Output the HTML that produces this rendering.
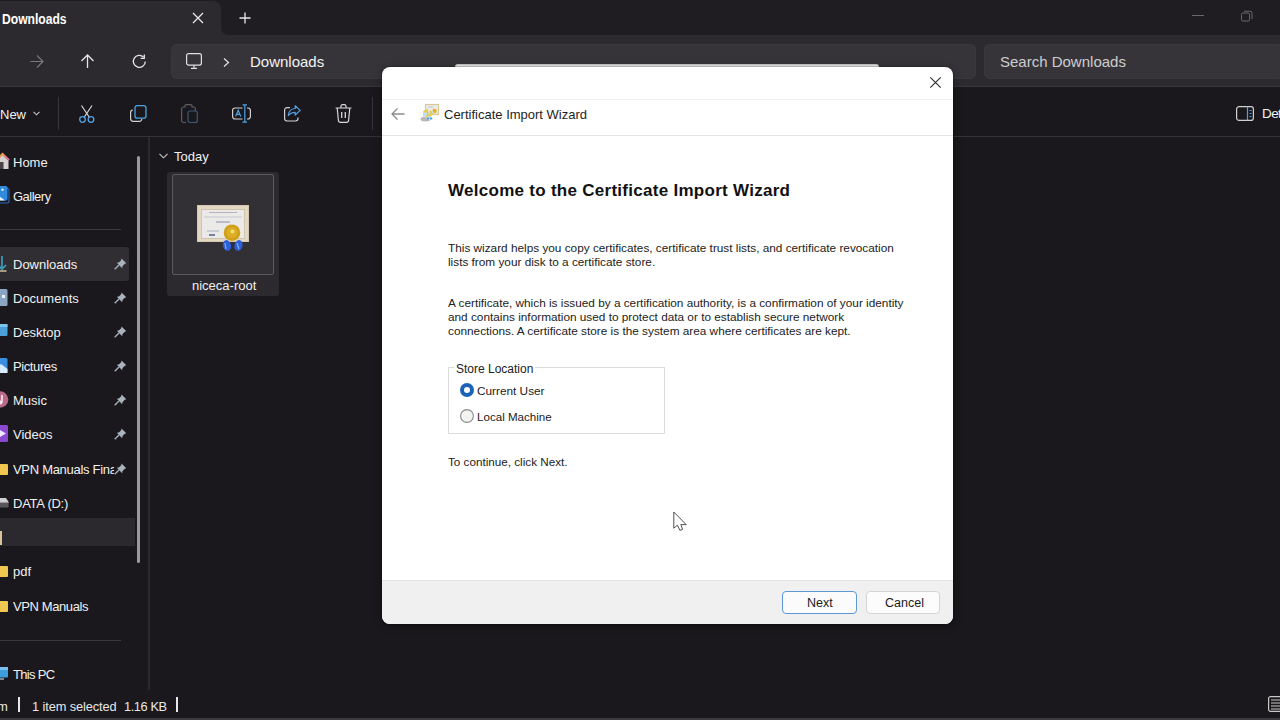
<!DOCTYPE html>
<html><head><meta charset="utf-8">
<style>
*{margin:0;padding:0;box-sizing:border-box}
html,body{width:1280px;height:720px;overflow:hidden;background:#1a181c;font-family:"Liberation Sans",sans-serif}
.a{position:absolute}
.t{position:absolute;white-space:nowrap;color:#fff}
svg{position:absolute;overflow:visible}
#titlebar{left:0;top:0;width:1280px;height:36px;background:#1f1d21}
#tbfill{left:210px;top:20px;width:30px;height:16px;background:#2c2a2e}
#tbdark{left:221px;top:0;width:1059px;height:35px;background:#1f1d21;border-radius:0 0 0 7px}
#tab{left:0;top:1px;width:221px;height:40px;background:#2c2a2e;border-radius:0 8px 0 0}
#nav{left:0;top:35px;width:1280px;height:52px;background:#2c2a2e}
#navline{left:0;top:86px;width:1280px;height:1px;background:#38363a}
#addr{left:171px;top:43.5px;width:805px;height:35px;background:#363438;border-radius:6px;box-shadow:inset 0 0 0 1px #3a383c}
#search{left:984px;top:43.5px;width:300px;height:35px;background:#363438;border-radius:6px;box-shadow:inset 0 0 0 1px #3a383c}
#cmd{left:0;top:87px;width:1280px;height:50px;background:#1a181c}
#cmdline{left:0;top:136px;width:1280px;height:1px;background:#353337}
#side{left:0;top:137px;width:150px;height:553px;background:#1a181c}
#sideline{left:148px;top:137px;width:2px;height:553px;background:#2b292d}
#status{left:0;top:690px;width:1280px;height:30px;background:#1a181c}
#botline{left:0;top:718px;width:1280px;height:2px;background:#3c3b40}
.sitem{position:absolute;left:13px;font-size:13px;color:#f0f0f0;white-space:nowrap}
.sep{position:absolute;height:1px;background:#3b393d}
.vsep{position:absolute;width:1px;background:#37353a}
</style></head><body>
<div class="a" id="titlebar"></div>
<div class="a" id="tbfill"></div>
<div class="a" id="tab"></div>
<div class="a" id="tbdark"></div>
<div class="a" id="nav"></div>
<div class="a" id="navline"></div>
<div class="a" id="addr"></div>
<div class="a" id="search"></div>
<div class="a" id="cmd"></div>
<div class="a" id="cmdline"></div>
<div class="a" id="side"></div>
<div class="a" id="sideline"></div>
<div class="a" id="status"></div>
<div class="a" id="botline"></div>

<!-- tab title -->
<div class="t" style="left:2px;top:11px;font-size:14px;font-weight:bold;transform:scaleX(0.865);transform-origin:0 0">Downloads</div>
<svg style="left:192px;top:12px" width="12" height="12" viewBox="0 0 12 12"><path d="M1 1L11 11M11 1L1 11" stroke="#e8e8e8" stroke-width="1.3" fill="none"/></svg>
<svg style="left:239px;top:12px" width="12" height="12" viewBox="0 0 12 12"><path d="M6 0.5V11.5M0.5 6H11.5" stroke="#e8e8e8" stroke-width="1.3" fill="none"/></svg>
<!-- window controls -->
<div class="a" style="left:1192px;top:15px;width:12px;height:1px;background:#6a686c"></div>
<svg style="left:1241px;top:10px" width="12" height="12" viewBox="0 0 12 12"><rect x="0.5" y="3" width="8" height="8" rx="1.5" stroke="#6a686c" stroke-width="1" fill="none"/><path d="M3 1.2H9a2 2 0 0 1 2 2V9" stroke="#6a686c" stroke-width="1" fill="none"/></svg>

<!-- nav icons -->
<svg style="left:30px;top:55px" width="14" height="13" viewBox="0 0 14 13"><path d="M0.5 6.5H13M7 0.5L13 6.5L7 12.5" stroke="#7a787c" stroke-width="1.2" fill="none"/></svg>
<svg style="left:81px;top:54px" width="13" height="14" viewBox="0 0 13 14"><path d="M6.5 14V1M0.5 7L6.5 1L12.5 7" stroke="#e6e6e6" stroke-width="1.3" fill="none"/></svg>
<svg style="left:132px;top:54px" width="15" height="15" viewBox="0 0 15 15"><path d="M13.3 7.5A6 6 0 1 1 11.6 3.2" stroke="#e6e6e6" stroke-width="1.3" fill="none"/><path d="M12.3 0.6V4.3H8.6" stroke="#e6e6e6" stroke-width="1.3" fill="none"/></svg>
<svg style="left:186px;top:53px" width="16" height="16" viewBox="0 0 16 16"><rect x="0.6" y="0.6" width="14.8" height="11.5" rx="2" stroke="#e0e0e0" stroke-width="1.2" fill="none"/><path d="M5 15.4H11M8 12.2V15.4" stroke="#e0e0e0" stroke-width="1.2" fill="none"/></svg>
<svg style="left:223px;top:58px" width="7" height="9" viewBox="0 0 7 9"><path d="M1 0.5L5.5 4.5L1 8.5" stroke="#e6e6e6" stroke-width="1.2" fill="none"/></svg>
<div class="t" style="left:250px;top:53px;font-size:15px;color:#f2f2f2">Downloads</div>
<div class="t" style="left:1000px;top:53px;font-size:15px;color:#cfcdd0">Search Downloads</div>

<!-- command bar -->
<div class="t" style="left:0px;top:107px;font-size:13px;color:#f2f2f2">New</div>
<svg style="left:33px;top:111px" width="7" height="5" viewBox="0 0 7 5"><path d="M0.5 0.8L3.5 3.8L6.5 0.8" stroke="#c8c8c8" stroke-width="1.1" fill="none"/></svg>
<div class="vsep" style="left:58px;top:97px;height:33px"></div>
<!-- scissors -->
<svg style="left:79px;top:105px" width="16" height="18" viewBox="0 0 16 18"><path d="M2.5 0.5L10.5 12.5M13 0.5L5 12.5" stroke="#d8d8d8" stroke-width="1.2" fill="none"/><circle cx="3.5" cy="14.5" r="2.8" stroke="#4fa3e3" stroke-width="1.3" fill="none"/><circle cx="12" cy="14.5" r="2.8" stroke="#4fa3e3" stroke-width="1.3" fill="none"/></svg>
<!-- copy -->
<svg style="left:130px;top:105px" width="17" height="17" viewBox="0 0 17 17"><path d="M2.8 5.2A2.3 2.3 0 0 0 0.6 7.5V13.5A2.8 2.8 0 0 0 3.4 16.3H9.5A2.3 2.3 0 0 0 11.8 14" stroke="#d0d0d0" stroke-width="1.2" fill="none"/><rect x="5" y="0.6" width="11" height="12.6" rx="2.3" stroke="#4fa3e3" stroke-width="1.3" fill="none"/></svg>
<!-- paste disabled -->
<svg style="left:181px;top:104px" width="17" height="19" viewBox="0 0 17 19"><path d="M4 3H2.6A2 2 0 0 0 0.6 5V16.5A2 2 0 0 0 2.6 18.5H5" stroke="#5e5c60" stroke-width="1.2" fill="none"/><path d="M4 3.5V1.8A1.2 1.2 0 0 1 5.2 0.6H9.8A1.2 1.2 0 0 1 11 1.8V3.5" stroke="#5e5c60" stroke-width="1.2" fill="none"/><path d="M11 3H12.4A2 2 0 0 1 14.4 5V7" stroke="#5e5c60" stroke-width="1.2" fill="none"/><rect x="7" y="7" width="9.3" height="11.5" rx="2" stroke="#3e5a70" stroke-width="1.2" fill="none"/></svg>
<!-- rename -->
<svg style="left:232px;top:104px" width="19" height="19" viewBox="0 0 19 19"><path d="M10.5 4H3A2.4 2.4 0 0 0 0.6 6.4V12.6A2.4 2.4 0 0 0 3 15H10.5" stroke="#d0d0d0" stroke-width="1.2" fill="none"/><path d="M15 4H16A2.4 2.4 0 0 1 18.4 6.4V12.6A2.4 2.4 0 0 1 16 15H15" stroke="#d0d0d0" stroke-width="1.2" fill="none"/><path d="M12.8 0.6V18.4M10.5 0.8H15M10.5 18.2H15" stroke="#4fa3e3" stroke-width="1.2" fill="none"/><path d="M3.6 12.5L6.2 6.2L8.8 12.5M4.6 10.3H7.8" stroke="#4fa3e3" stroke-width="1.2" fill="none"/></svg>
<!-- share -->
<svg style="left:284px;top:105px" width="17" height="17" viewBox="0 0 17 17"><path d="M6 2.6H3A2.4 2.4 0 0 0 0.6 5V13.6A2.4 2.4 0 0 0 3 16H11.6A2.4 2.4 0 0 0 14 13.6V12.5" stroke="#d0d0d0" stroke-width="1.2" fill="none"/><path d="M11.2 0.8L16.2 5.4L11.2 10V7.3C8 7.3 6 8.2 4.2 10.6C4.6 6.5 7 3.8 11.2 3.5Z" stroke="#4fa3e3" stroke-width="1.2" fill="none" stroke-linejoin="round"/></svg>
<!-- delete -->
<svg style="left:335px;top:104px" width="17" height="19" viewBox="0 0 17 19"><path d="M0.6 4H16.4M6 4V2.2A1.6 1.6 0 0 1 7.6 0.6H9.4A1.6 1.6 0 0 1 11 2.2V4" stroke="#d8d8d8" stroke-width="1.2" fill="none"/><path d="M2.2 4L3.4 16.2A2.3 2.3 0 0 0 5.7 18.4H11.3A2.3 2.3 0 0 0 13.6 16.2L14.8 4" stroke="#d8d8d8" stroke-width="1.2" fill="none"/><path d="M6.7 8V14M10.3 8V14" stroke="#d8d8d8" stroke-width="1.3" fill="none"/></svg>
<div class="vsep" style="left:372px;top:97px;height:33px"></div>
<!-- details -->
<svg style="left:1236px;top:106px" width="18" height="15" viewBox="0 0 18 15"><rect x="0.6" y="0.6" width="16.8" height="13.8" rx="2.5" stroke="#d0d0d0" stroke-width="1.2" fill="none"/><path d="M11.5 0.8V14.2" stroke="#4fa3e3" stroke-width="1.2"/><path d="M13.5 4.5H15.5M13.5 7.5H15.5M13.5 10.5H15.5" stroke="#4fa3e3" stroke-width="1"/></svg>
<div class="t" style="left:1262px;top:106px;font-size:13.5px;color:#f2f2f2;letter-spacing:-0.6px">Details</div>

<!-- sidebar -->
<div class="a" style="left:0;top:247px;width:129px;height:34px;background:#302e32;border-radius:0 3px 3px 0"></div>
<div class="a" style="left:0;top:518px;width:135px;height:28px;background:#2b292d;border-radius:0"></div>
<div class="sep" style="left:0;top:229px;width:121px"></div>
<div class="sep" style="left:0;top:640px;width:121px"></div>
<div class="a" style="left:137px;top:156px;width:3px;height:407px;background:#9b999d;border-radius:2px"></div>

<div id="sidebar-items">
<div class="sitem" style="top:155px">Home</div>
<div class="sitem" style="top:189px;letter-spacing:-0.5px">Gallery</div>
<div class="sitem" style="top:257px">Downloads</div>
<div class="sitem" style="top:291px">Documents</div>
<div class="sitem" style="top:325px">Desktop</div>
<div class="sitem" style="top:359px;letter-spacing:-0.4px">Pictures</div>
<div class="sitem" style="top:393px">Music</div>
<div class="sitem" style="top:427px">Videos</div>
<div class="sitem" style="top:462px;letter-spacing:-0.3px;width:101px;overflow:hidden">VPN Manuals Final</div>
<div class="sitem" style="top:496px;letter-spacing:-0.25px">DATA (D:)</div>
<div class="sitem" style="top:564px">pdf</div>
<div class="sitem" style="top:599px;letter-spacing:-0.4px">VPN Manuals</div>
<div class="sitem" style="top:667px;letter-spacing:-0.7px">This PC</div>
</div>
<svg style="left:114px;top:258px" width="13" height="12" viewBox="0 0 13 12"><path d="M7.5 0.5L12.3 5.3L10.8 5.8L8.4 8.2L8.2 10.2L2.8 4.8L4.8 4.6L7.2 2.2Z" fill="#a9b3bd"/><path d="M5 7L0.7 11.3" stroke="#a9b3bd" stroke-width="1.3"/></svg>
<svg style="left:114px;top:292px" width="13" height="12" viewBox="0 0 13 12"><path d="M7.5 0.5L12.3 5.3L10.8 5.8L8.4 8.2L8.2 10.2L2.8 4.8L4.8 4.6L7.2 2.2Z" fill="#a9b3bd"/><path d="M5 7L0.7 11.3" stroke="#a9b3bd" stroke-width="1.3"/></svg>
<svg style="left:114px;top:326px" width="13" height="12" viewBox="0 0 13 12"><path d="M7.5 0.5L12.3 5.3L10.8 5.8L8.4 8.2L8.2 10.2L2.8 4.8L4.8 4.6L7.2 2.2Z" fill="#a9b3bd"/><path d="M5 7L0.7 11.3" stroke="#a9b3bd" stroke-width="1.3"/></svg>
<svg style="left:114px;top:360px" width="13" height="12" viewBox="0 0 13 12"><path d="M7.5 0.5L12.3 5.3L10.8 5.8L8.4 8.2L8.2 10.2L2.8 4.8L4.8 4.6L7.2 2.2Z" fill="#a9b3bd"/><path d="M5 7L0.7 11.3" stroke="#a9b3bd" stroke-width="1.3"/></svg>
<svg style="left:114px;top:394px" width="13" height="12" viewBox="0 0 13 12"><path d="M7.5 0.5L12.3 5.3L10.8 5.8L8.4 8.2L8.2 10.2L2.8 4.8L4.8 4.6L7.2 2.2Z" fill="#a9b3bd"/><path d="M5 7L0.7 11.3" stroke="#a9b3bd" stroke-width="1.3"/></svg>
<svg style="left:114px;top:428px" width="13" height="12" viewBox="0 0 13 12"><path d="M7.5 0.5L12.3 5.3L10.8 5.8L8.4 8.2L8.2 10.2L2.8 4.8L4.8 4.6L7.2 2.2Z" fill="#a9b3bd"/><path d="M5 7L0.7 11.3" stroke="#a9b3bd" stroke-width="1.3"/></svg>
<svg style="left:114px;top:463px" width="13" height="12" viewBox="0 0 13 12"><path d="M7.5 0.5L12.3 5.3L10.8 5.8L8.4 8.2L8.2 10.2L2.8 4.8L4.8 4.6L7.2 2.2Z" fill="#a9b3bd"/><path d="M5 7L0.7 11.3" stroke="#a9b3bd" stroke-width="1.3"/></svg>


<svg style="left:0;top:152px" width="10" height="18" viewBox="0 0 10 18"><defs><linearGradient id="rg" x1="0" y1="0" x2="1" y2="1"><stop offset="0" stop-color="#f0b030"/><stop offset="1" stop-color="#d060b0"/></linearGradient></defs><path d="M-4 9L2.5 2.5L8.5 8.5V17H-4Z" fill="#d6d2d0"/><rect x="-4" y="10" width="7.5" height="7" fill="#4a4248"/><path d="M-4 8.5L2.5 2L9.2 8.2" stroke="url(#rg)" stroke-width="2.2" fill="none"/></svg>
<svg style="left:0;top:186px" width="10" height="18" viewBox="0 0 10 18"><rect x="-4" y="2.5" width="13" height="14.5" rx="1.5" fill="none" stroke="#2a64b8" stroke-width="1.2"/><rect x="-6" y="0" width="13.5" height="14.5" rx="1.5" fill="#2f8ae0"/><path d="M-6 6L5 14.5H-6Z" fill="#eaf4fc"/><circle cx="2.5" cy="3.8" r="1.2" fill="#dff0fc"/></svg>
<svg style="left:0;top:256px" width="7" height="16" viewBox="0 0 7 16"><path d="M2 0V12" stroke="#3fa3c0" stroke-width="1.6"/><path d="M-3 8L2 13L6 9" stroke="#3fa3c0" stroke-width="1.6" fill="none"/><path d="M-3 15H6.5" stroke="#c8b898" stroke-width="1.6"/></svg>
<svg style="left:0;top:289px" width="8" height="17" viewBox="0 0 8 17"><rect x="-6" y="0" width="13.5" height="17" rx="1.5" fill="#8aa6c4"/><rect x="2" y="6" width="3" height="3" fill="#e8f0f8"/></svg>
<svg style="left:0;top:324px" width="8" height="14" viewBox="0 0 8 14"><rect x="-6" y="0" width="13.5" height="12" rx="1.5" fill="#4aa0d8"/><rect x="-6" y="0" width="13.5" height="3" fill="#7cc4ee"/></svg>
<svg style="left:0;top:358px" width="8" height="15" viewBox="0 0 8 15"><rect x="-6" y="0" width="13.5" height="15" rx="1.5" fill="#3a8ee0"/><path d="M-6 12L1 6L7.5 11V15H-6Z" fill="#d6ebfb"/></svg>
<svg style="left:0;top:391px" width="9" height="17" viewBox="0 0 9 17"><circle cx="0" cy="8.5" r="8.3" fill="#b86a8a"/><path d="M2 4V11" stroke="#f4e8ee" stroke-width="1.6"/><circle cx="0.5" cy="11.5" r="2" fill="#f4e8ee"/></svg>
<svg style="left:0;top:425px" width="9" height="17" viewBox="0 0 9 17"><rect x="-6" y="0" width="14" height="17" rx="1.5" fill="#8a4ad0"/><path d="M0 5L6 8.5L0 12Z" fill="#f0e8ff"/></svg>
<div class="a" style="left:0;top:464px;width:8px;height:11px;background:#f0c850;border-radius:0 1px 1px 0"></div>
<svg style="left:0;top:498px" width="9" height="10" viewBox="0 0 9 10"><path d="M-3 0H6L8.6 4H-3Z" fill="#d0d0d4"/><rect x="-3" y="4" width="11.6" height="5.5" rx="0.8" fill="#58565a"/><rect x="-3" y="4" width="11.6" height="1" fill="#9a989c"/></svg>
<div class="a" style="left:0;top:531px;width:2px;height:14px;background:#d8c49a"></div>
<div class="a" style="left:0;top:566px;width:8px;height:11px;background:#f0c850;border-radius:0 1px 1px 0"></div>
<div class="a" style="left:0;top:601px;width:8px;height:11px;background:#f0c850;border-radius:0 1px 1px 0"></div>
<svg style="left:0;top:667px" width="9" height="14" viewBox="0 0 9 14"><rect x="-6" y="0" width="14" height="10.5" rx="1" fill="#3d9ee0"/><rect x="-6" y="0" width="14" height="3" fill="#7ac0ee"/><rect x="-2" y="11" width="6" height="2" fill="#7a8a9a"/></svg>


<!-- content -->
<svg style="left:159px;top:153px" width="9" height="6" viewBox="0 0 9 6"><path d="M0.5 0.8L4.5 4.8L8.5 0.8" stroke="#c8c8c8" stroke-width="1.1" fill="none"/></svg>
<div class="t" style="left:174px;top:149px;font-size:13px;color:#f0f0f0">Today</div>
<div class="a" style="left:167px;top:172px;width:112px;height:124px;background:#2c2a2e;border-radius:3px"></div>
<div class="a" style="left:172px;top:174px;width:102px;height:101px;border:1px solid #5a585c;border-radius:2px;background:#323034"></div>

<div class="a" style="left:197px;top:205px;width:52px;height:37px;background:#e2d8c4;border:1px solid #d4c8b0"></div>
<div class="a" style="left:201px;top:209px;width:44px;height:30px;border:1px solid #cfc4ae;background:#eceae8"></div>
<div class="a" style="left:209px;top:212px;width:28px;height:1px;background:#b4b4c0"></div>
<div class="a" style="left:204px;top:216px;width:38px;height:2px;background:#d8d8de"></div>
<div class="a" style="left:216px;top:221px;width:14px;height:2px;background:#b8bccc"></div>
<div class="a" style="left:207px;top:230px;width:12px;height:2px;background:#c8ccd4"></div>
<div class="a" style="left:209px;top:234px;width:6px;height:2px;background:#7880a0"></div>
<svg style="left:222px;top:223px" width="22" height="29" viewBox="0 0 22 29"><ellipse cx="5" cy="22.5" rx="4" ry="5.5" transform="rotate(-15 5 22.5)" fill="#2f5fd8"/><ellipse cx="16.5" cy="22.5" rx="4" ry="5.5" transform="rotate(15 16.5 22.5)" fill="#2f5fd8"/><path d="M3 20L4 26M15 20L17 26" stroke="#7ab0f0" stroke-width="1.2"/><circle cx="10" cy="9.7" r="8.3" fill="#cfa018"/><circle cx="10" cy="9.7" r="5.5" fill="#dcae24"/><circle cx="10.5" cy="8.5" r="2" fill="#f4dc70"/></svg>

<div class="t" style="left:192px;top:278px;font-size:13px;color:#f0f0f0">niceca-root</div>

<!-- status bar -->
<div class="t" style="left:-3px;top:699px;font-size:13px;color:#e8e8e8">m</div>
<div class="a" style="left:18px;top:697px;width:2px;height:15px;background:#e8e8e8"></div>
<div class="t" style="left:32px;top:699px;font-size:12.8px;color:#e8e8e8;letter-spacing:-0.1px">1 item selected</div>
<div class="t" style="left:124px;top:699px;font-size:12.8px;color:#e8e8e8;letter-spacing:-0.4px">1.16 KB</div>
<div class="a" style="left:176px;top:697px;width:2px;height:15px;background:#e8e8e8"></div>
<svg style="left:1268px;top:696px" width="14" height="16" viewBox="0 0 14 16"><rect x="0.6" y="0.6" width="14" height="14.8" rx="2" stroke="#c8c8c8" stroke-width="1.2" fill="none"/><path d="M3 4H14M3 7H14M3 10H14M3 13H14" stroke="#c8c8c8" stroke-width="1.2"/></svg>

<!-- ghost behind dialog -->
<div class="a" style="left:455px;top:64px;width:424px;height:4px;background:#e6e6e6;border-radius:3px 3px 0 0;border-top:1px solid #c8c8c8"></div>
<div class="a" id="dlg" style="left:382px;top:67px;width:571px;height:557px;background:#fff;border-radius:8px;overflow:hidden;box-shadow:0 0 0 1px rgba(0,0,0,0.12),0 2px 8px rgba(0,0,0,0.4)">
 <div class="a" style="left:0;top:32px;width:571px;height:1px;background:#f0f0f0"></div>
 <svg style="left:548px;top:10px" width="11" height="11" viewBox="0 0 11 11"><path d="M0.3 0.3L10.7 10.7M10.7 0.3L0.3 10.7" stroke="#2a2a2a" stroke-width="1.1" fill="none"/></svg>
 <svg style="left:9px;top:41px" width="14" height="12" viewBox="0 0 14 12"><path d="M13.5 6H1M6.5 0.5L1 6L6.5 11.5" stroke="#8c8c8c" stroke-width="1.3" fill="none"/></svg>
 <svg style="left:38px;top:37px" width="20" height="20" viewBox="0 0 20 20"><rect x="5.5" y="0.5" width="13" height="10" fill="#ecebe8" stroke="#d8c898" stroke-width="1.2"/><path d="M8 3H13" stroke="#c0c0c0" stroke-width="1"/><circle cx="14.5" cy="7" r="2.2" fill="#e8b020"/><ellipse cx="5.5" cy="15" rx="5" ry="2.5" fill="#b8b8bc"/><path d="M3 7L6 5L9 8L12 6L14 9L11 12L13 15L9 16L6 14L3 12Z" fill="#bfe0f6"/><path d="M4 8L7 6L8 11L6 13M10 7L12 10L9 12" stroke="#f0c830" stroke-width="1.6" fill="none"/><circle cx="8" cy="14.5" r="0.9" fill="#2a8ad0"/><circle cx="11" cy="14.5" r="0.9" fill="#2a8ad0"/></svg>
 <div class="t" style="left:62px;top:40px;font-size:13px;color:#1e1e1e">Certificate Import Wizard</div>
 <div class="a" style="left:0;top:68px;width:571px;height:1px;background:#e3e3e3"></div>
 <div class="t" style="left:66px;top:114px;font-size:17px;font-weight:bold;color:#111;letter-spacing:0.28px">Welcome to the Certificate Import Wizard</div>
 <div class="t" style="left:66px;top:174px;font-size:11.8px;line-height:14px;color:#222">This wizard helps you copy certificates, certificate trust lists, and certificate revocation<br>lists from your disk to a certificate store.</div>
 <div class="t" style="left:66px;top:229px;font-size:11.8px;line-height:14px;color:#222">A certificate, which is issued by a certification authority, is a confirmation of your identity<br>and contains information used to protect data or to establish secure network<br>connections. A certificate store is the system area where certificates are kept.</div>
 <div class="a" style="left:66px;top:300px;width:217px;height:67px;border:1px solid #dcdcdc"></div>
 <div class="t" style="left:72px;top:295px;font-size:12px;color:#222;background:#fff;padding:0 2px">Store Location</div>
 <svg style="left:78px;top:316px" width="14" height="14" viewBox="0 0 14 14"><circle cx="7" cy="7" r="7" fill="#1a63b8"/><circle cx="7" cy="7" r="3" fill="#fff"/></svg>
 <div class="t" style="left:95px;top:317px;font-size:11.8px;color:#222">Current User</div>
 <svg style="left:78px;top:342px" width="14" height="14" viewBox="0 0 14 14"><circle cx="7" cy="7" r="6.4" fill="#f3f3f3" stroke="#8a8a8a" stroke-width="1.1"/></svg>
 <div class="t" style="left:95px;top:343px;font-size:11.6px;color:#222">Local Machine</div>
 <div class="t" style="left:66px;top:388px;font-size:11.7px;color:#222">To continue, click Next.</div>
 <div class="a" style="left:0;top:513px;width:571px;height:44px;background:#f0f0f0;border-top:1px solid #e2e2e2"></div>
 <div class="a" style="left:400px;top:524px;width:75px;height:23px;background:#fbfbfb;border:1.5px solid #5c98d4;border-radius:4px"></div>
 <div class="t" style="left:425px;top:529px;font-size:12.5px;color:#1a1a1a">Next</div>
 <div class="a" style="left:484px;top:524px;width:74px;height:23px;background:#fcfcfc;border:1px solid #d4d4d4;border-radius:4px"></div>
 <div class="t" style="left:503px;top:529px;font-size:12.5px;color:#1a1a1a">Cancel</div>
</div>
<!-- cursor -->
<svg style="left:673px;top:511px" width="15" height="21" viewBox="0 0 15 21"><path d="M0.8 1V17.2L4.4 14.2L6.9 19.4L9.6 18.3L7.8 13.6H13.2Z" fill="#fff" stroke="#505050" stroke-width="1" stroke-linejoin="round"/></svg>

</body></html>
